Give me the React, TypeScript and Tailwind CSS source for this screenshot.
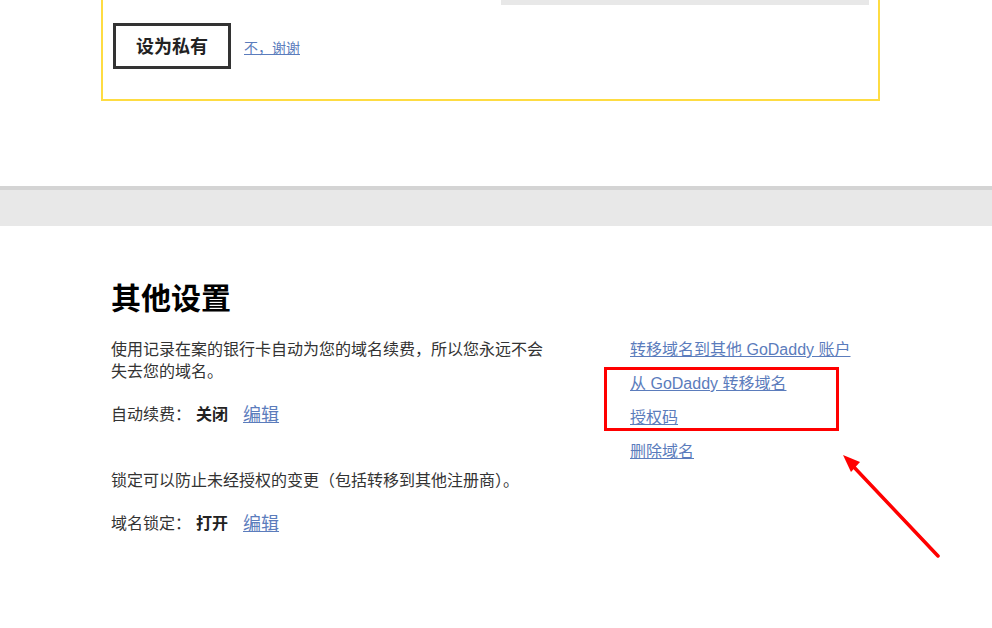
import React from "react";

const font = { fontFamily: '"Liberation Sans", "Noto Sans CJK SC", sans-serif' };

export default function App() {
  const links = [
    "转移域名到其他 GoDaddy 账户",
    "从 GoDaddy 转移域名",
    "授权码",
    "删除域名",
  ];

  return (
    <div className="w-[992px] h-[628px] overflow-hidden bg-white text-[#333]" style={font}>
      {/* Top: privacy box */}
      <section className="h-[186px]">
        <div className="ml-[101px] w-[779px] border-2 border-t-0 border-[#fedc42] pl-[10px] pr-[9px] pb-[30px]">
          <div className="flex justify-end">
            <div className="w-[368px] h-[5px] bg-[#e8e8e8]"></div>
          </div>
          <div className="mt-[18px] flex items-center gap-[13px]">
            <button className="h-[46px] px-[20px] pt-[2px] border-[3px] border-[#333] text-[18px] font-bold text-[#222]">
              设为私有
            </button>
            <a className="mt-[4px] text-[14px] text-[#5b7cbc] underline">不，谢谢</a>
          </div>
        </div>
      </section>

      {/* Divider band */}
      <div className="h-[40px] border-t-4 border-[#d4d4d4] bg-[#e8e8e8]"></div>

      {/* Other settings */}
      <section className="relative pl-[111px] pt-[55px]">
        <h2 className="text-[30px] leading-[36px] font-bold text-black">其他设置</h2>
        <div className="mt-[22px] flex">
          <div className="w-[519px]">
            <p className="w-[440px] text-[16px] leading-[22px]">
              使用记录在案的银行卡自动为您的域名续费，所以您永远不会失去您的域名。
            </p>
            <div className="mt-[20px] flex items-center h-[24px] text-[16px]">
              <span>自动续费：</span>
              <span className="ml-[5px] font-bold text-[#222]">关闭</span>
              <a className="ml-[15px] text-[18px] text-[#5b7cbc] underline">编辑</a>
            </div>
            <p className="mt-[43px] text-[16px] leading-[22px]">
              锁定可以防止未经授权的变更（包括转移到其他注册商）。
            </p>
            <div className="mt-[20px] flex items-center h-[24px] text-[16px]">
              <span>域名锁定：</span>
              <span className="ml-[5px] font-bold text-[#222]">打开</span>
              <a className="ml-[15px] text-[18px] text-[#5b7cbc] underline">编辑</a>
            </div>
          </div>
          <ul className="-mt-[6px] flex flex-col">
            {links.map((l) => (
              <li key={l} className="h-[34px] leading-[34px] text-[16px]">
                <a className="text-[#5b7cbc] underline">{l}</a>
              </li>
            ))}
          </ul>
        </div>

        {/* annotation: highlight box + arrow */}
        <div className="absolute left-[604px] top-[141px] w-[235px] h-[64px] border-[3px] border-[#ff0000]"></div>
        <svg className="absolute left-[830px] top-[210px]" width="120" height="130" viewBox="0 0 120 130">
          <line x1="21" y1="28" x2="108" y2="120" stroke="#ff0000" strokeWidth="3.5" strokeLinecap="round" />
          <polygon points="13,19 30,26 21,36" fill="#ff0000" />
        </svg>
      </section>
    </div>
  );
}
